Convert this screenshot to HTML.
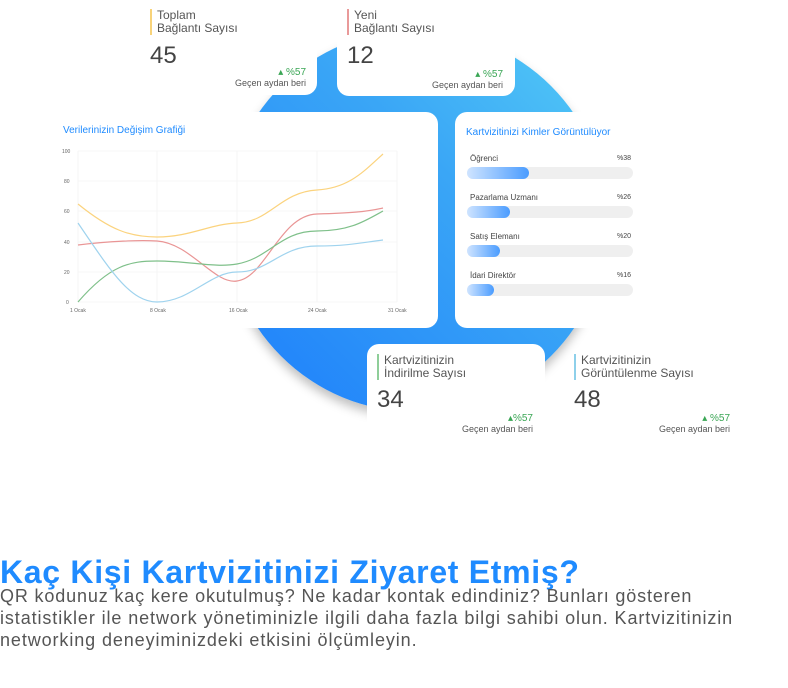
<!DOCTYPE html>
<html><head><meta charset="utf-8"><style>
*{margin:0;padding:0;box-sizing:border-box}
body{width:788px;height:688px;background:#fff;font-family:"Liberation Sans",sans-serif;position:relative;overflow:hidden;color:#444}
.abs{position:absolute}
.card{position:absolute;background:#fff;border-radius:12px}
.lbl{position:absolute;font-size:12px;line-height:13px;color:#555;padding-left:5px}
.num{position:absolute;font-size:24px;color:#444}
.up{position:absolute;font-size:9px;color:#555;text-align:right;line-height:11px}
.up b{font-weight:normal;color:#3aa655;font-size:10px}
.bl{position:absolute;font-size:8px;color:#444}
.pc{position:absolute;font-size:7px;color:#444}
.tr{position:absolute;left:467px;width:166px;height:12px;border-radius:6px;background:#efefef}
.fl{position:absolute;left:0;top:0;height:12px;border-radius:6px;background:linear-gradient(90deg,#cfe4ff,#4a9cff)}
</style></head><body>
<div class="abs" style="left:225px;top:30px;width:382px;height:382px;border-radius:50%;background:linear-gradient(45deg,#1c7dfb 0%,#3aa6f6 60%,#55cdf6 100%);box-shadow:0 6px 10px rgba(0,0,0,0.25)"></div>
<div class="card" style="left:120px;top:-20px;width:197px;height:115px"></div>
<div class="card" style="left:337px;top:-20px;width:178px;height:116px"></div>
<div class="card" style="left:40px;top:112px;width:398px;height:216px"></div>
<div class="card" style="left:455px;top:112px;width:360px;height:216px"></div>
<div class="card" style="left:367px;top:344px;width:178px;height:120px;border-radius:12px 12px 0 0"></div>
<div class="abs" style="left:0;top:440px;width:788px;height:248px;background:#fff"></div>

<div class="lbl" style="left:150px;top:9px;border-left:2px solid #f8d37a">Toplam<br>Bağlantı Sayısı</div>
<div class="num" style="left:150px;top:42px">45</div>
<div class="up" style="left:220px;top:67px;width:86px"><b>▴ %57</b><br>Geçen aydan beri</div>
<div class="lbl" style="left:347px;top:9px;border-left:2px solid #e99a9a">Yeni<br>Bağlantı Sayısı</div>
<div class="num" style="left:347px;top:42px">12</div>
<div class="up" style="left:417px;top:69px;width:86px"><b>▴ %57</b><br>Geçen aydan beri</div>

<div class="abs" style="left:63px;top:125px;font-size:10px;color:#1f8bff">Verilerinizin Değişim Grafiği</div>
<svg class="abs" style="left:0;top:0" width="440" height="330">
<g stroke="#f0f0f0" stroke-width="0.6" fill="none">
<path d="M78 151H397M78 181H397M78 211H397M78 242H397M78 272H397M78 302H397M78 151V302M157 151V302M237 151V302M317 151V302M397 151V302"/></g>
<g font-size="5" fill="#666" font-family="Liberation Sans">
<text x="62" y="153">100</text><text x="64" y="183">80</text><text x="64" y="213">60</text><text x="64" y="244">40</text><text x="64" y="274">20</text><text x="66" y="304">0</text>
<text x="70" y="312">1 Ocak</text><text x="150" y="312">8 Ocak</text><text x="229" y="312">16 Ocak</text><text x="308" y="312">24 Ocak</text><text x="388" y="312">31 Ocak</text></g>
<g fill="none" stroke-width="1.2">
<path stroke="#fbd37e" d="M78 204C110 230 130 237 157 237C190 237 210 224 237 223C270 222 280 192 317 190C350 188 365 170 383 154"/>
<path stroke="#e99595" d="M78 245C110 241 140 240 157 241C190 243 215 285 237 281C265 278 280 215 317 214C350 213 365 212 383 208"/>
<path stroke="#7fc08a" d="M78 302C110 265 130 261 157 261C190 261 215 268 237 264C270 258 280 231 317 231C350 231 365 221 383 211"/>
<path stroke="#9fd3ee" d="M78 223C110 270 130 302 157 302C190 302 210 272 237 272C270 272 280 246 317 246C350 246 365 242 383 240"/>
</g></svg>

<div class="abs" style="left:466px;top:127px;font-size:10px;color:#1f8bff">Kartvizitinizi Kimler Görüntülüyor</div>
<div class="bl" style="left:470px;top:154px">Öğrenci</div><div class="pc" style="left:617px;top:155px">%38</div>
<div class="tr" style="top:167px"><div class="fl" style="width:62px"></div></div>
<div class="bl" style="left:470px;top:193px">Pazarlama Uzmanı</div><div class="pc" style="left:617px;top:194px">%26</div>
<div class="tr" style="top:206px"><div class="fl" style="width:43px"></div></div>
<div class="bl" style="left:470px;top:232px">Satış Elemanı</div><div class="pc" style="left:617px;top:233px">%20</div>
<div class="tr" style="top:245px"><div class="fl" style="width:33px"></div></div>
<div class="bl" style="left:470px;top:271px">İdari Direktör</div><div class="pc" style="left:617px;top:272px">%16</div>
<div class="tr" style="top:284px"><div class="fl" style="width:27px"></div></div>

<div class="lbl" style="left:377px;top:354px;border-left:2px solid #8fce99">Kartvizitinizin<br>İndirilme Sayısı</div>
<div class="num" style="left:377px;top:386px">34</div>
<div class="up" style="left:447px;top:413px;width:86px"><b>▴%57</b><br>Geçen aydan beri</div>
<div class="lbl" style="left:574px;top:354px;border-left:2px solid #8ed0ea">Kartvizitinizin<br>Görüntülenme Sayısı</div>
<div class="num" style="left:574px;top:386px">48</div>
<div class="up" style="left:644px;top:413px;width:86px"><b>▴ %57</b><br>Geçen aydan beri</div>

<div class="abs" style="left:0;top:554px;font-size:32px;font-weight:bold;color:#1f8bff;white-space:nowrap;letter-spacing:0.7px">Kaç Kişi Kartvizitinizi Ziyaret Etmiş?</div>
<div class="abs" style="left:0;top:585px;font-size:18px;line-height:22px;color:#555;white-space:nowrap">
<div style="letter-spacing:0.85px">QR kodunuz kaç kere okutulmuş? Ne kadar kontak edindiniz? Bunları gösteren</div>
<div style="letter-spacing:0.9px">istatistikler ile network yönetiminizle ilgili daha fazla bilgi sahibi olun. Kartvizitinizin</div>
<div style="letter-spacing:0.9px">networking deneyiminizdeki etkisini ölçümleyin.</div>
</div>
</body></html>
